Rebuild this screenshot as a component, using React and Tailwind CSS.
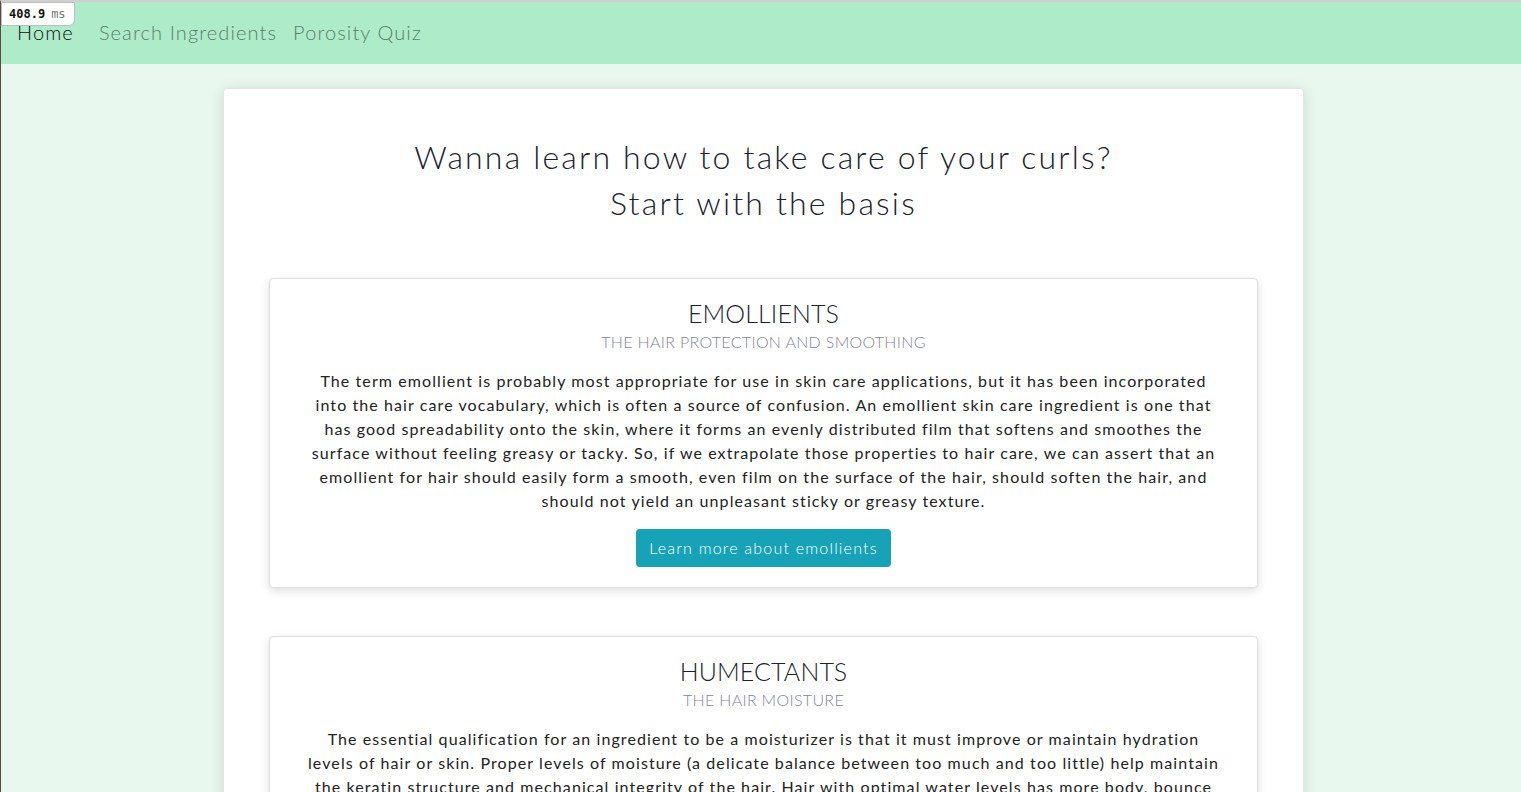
import React from "react";

const font = { fontFamily: "Lato, 'Open Sans', sans-serif" };

function Section({ title, subtitle, lines, button }) {
  return (
    <div className="bg-white border border-[#dedede] rounded-[4px] shadow-[0_3px_10px_rgba(0,0,0,0.13)] px-5 pt-[19px] pb-5 text-center">
      <h3 className="text-[25px] leading-[30px] font-light tracking-[0.005em] text-[#1c2230]">{title}</h3>
      <div className="mt-[2px] text-[16px] leading-[24px] font-light tracking-[0.02em] text-[#85859a]">{subtitle}</div>
      <p className="mt-[15px] text-[16px] leading-[24px] tracking-[0.068em] text-[#222222]">
        {lines.map((l, i) => (
          <React.Fragment key={i}>
            {l}
            {i < lines.length - 1 && <br />}
          </React.Fragment>
        ))}
      </p>
      {button && (
        <button className="mt-4 h-[38px] px-[13px] bg-[#17a2b8] text-white rounded-[4px] text-[16px] font-light tracking-[0.075em]">
          {button}
        </button>
      )}
    </div>
  );
}

export default function App() {
  return (
    <div style={font} className="relative min-h-screen bg-[#e8f8ee] border-t-2 border-t-[#cfcfcf] border-l border-l-[#5b4a3e]">
      <div className="absolute left-0 top-0 h-[24px] w-[74px] bg-white border border-[#bdbdbd] rounded-br-[6px] flex items-center pl-[7px] text-[12px]" style={{ fontFamily: "'DejaVu Sans Mono', monospace" }}>
        <span className="font-bold text-[#111]">408.9</span>
        <span className="ml-[6px] text-[#777]">ms</span>
      </div>
      <nav className="h-[62px] bg-[#aeebc9] flex items-center pl-[16px] pb-[2px] gap-[16px] text-[20px] tracking-[0.055em] font-light">
        <a className="mr-[9px] text-[#111]">Home</a>
        <a className="text-[#5d7d6c]">Search Ingredients</a>
        <a className="text-[#5d7d6c]">Porosity Quiz</a>
      </nav>
      <main className="ml-[222px] mt-6 w-[1081px] bg-white rounded-[4px] border border-[#e4e4e4] shadow-[0_2px_14px_rgba(0,0,0,0.12)] px-[45px] pt-[45px]">
        <h1 className="text-center text-[32px] leading-[46px] font-light tracking-[0.068em] text-[#1c2230]">
          Wanna learn how to take care of your curls?
          <br />
          Start with the basis
        </h1>
        <div className="mt-[52px] flex flex-col gap-12 pb-12">
          <Section
            title="EMOLLIENTS"
            subtitle="THE HAIR PROTECTION AND SMOOTHING"
            lines={[
              "The term emollient is probably most appropriate for use in skin care applications, but it has been incorporated",
              "into the hair care vocabulary, which is often a source of confusion. An emollient skin care ingredient is one that",
              "has good spreadability onto the skin, where it forms an evenly distributed film that softens and smoothes the",
              "surface without feeling greasy or tacky. So, if we extrapolate those properties to hair care, we can assert that an",
              "emollient for hair should easily form a smooth, even film on the surface of the hair, should soften the hair, and",
              "should not yield an unpleasant sticky or greasy texture.",
            ]}
            button="Learn more about emollients"
          />
          <Section
            title="HUMECTANTS"
            subtitle="THE HAIR MOISTURE"
            lines={[
              "The essential qualification for an ingredient to be a moisturizer is that it must improve or maintain hydration",
              "levels of hair or skin. Proper levels of moisture (a delicate balance between too much and too little) help maintain",
              "the keratin structure and mechanical integrity of the hair. Hair with optimal water levels has more body, bounce",
              "and elasticity, and it is less prone to breakage. Humectants attract water from the environment and hold it",
              "within the hair shaft, keeping strands hydrated and flexible.",
            ]}
            button="Learn more about humectants"
          />
        </div>
      </main>
    </div>
  );
}
